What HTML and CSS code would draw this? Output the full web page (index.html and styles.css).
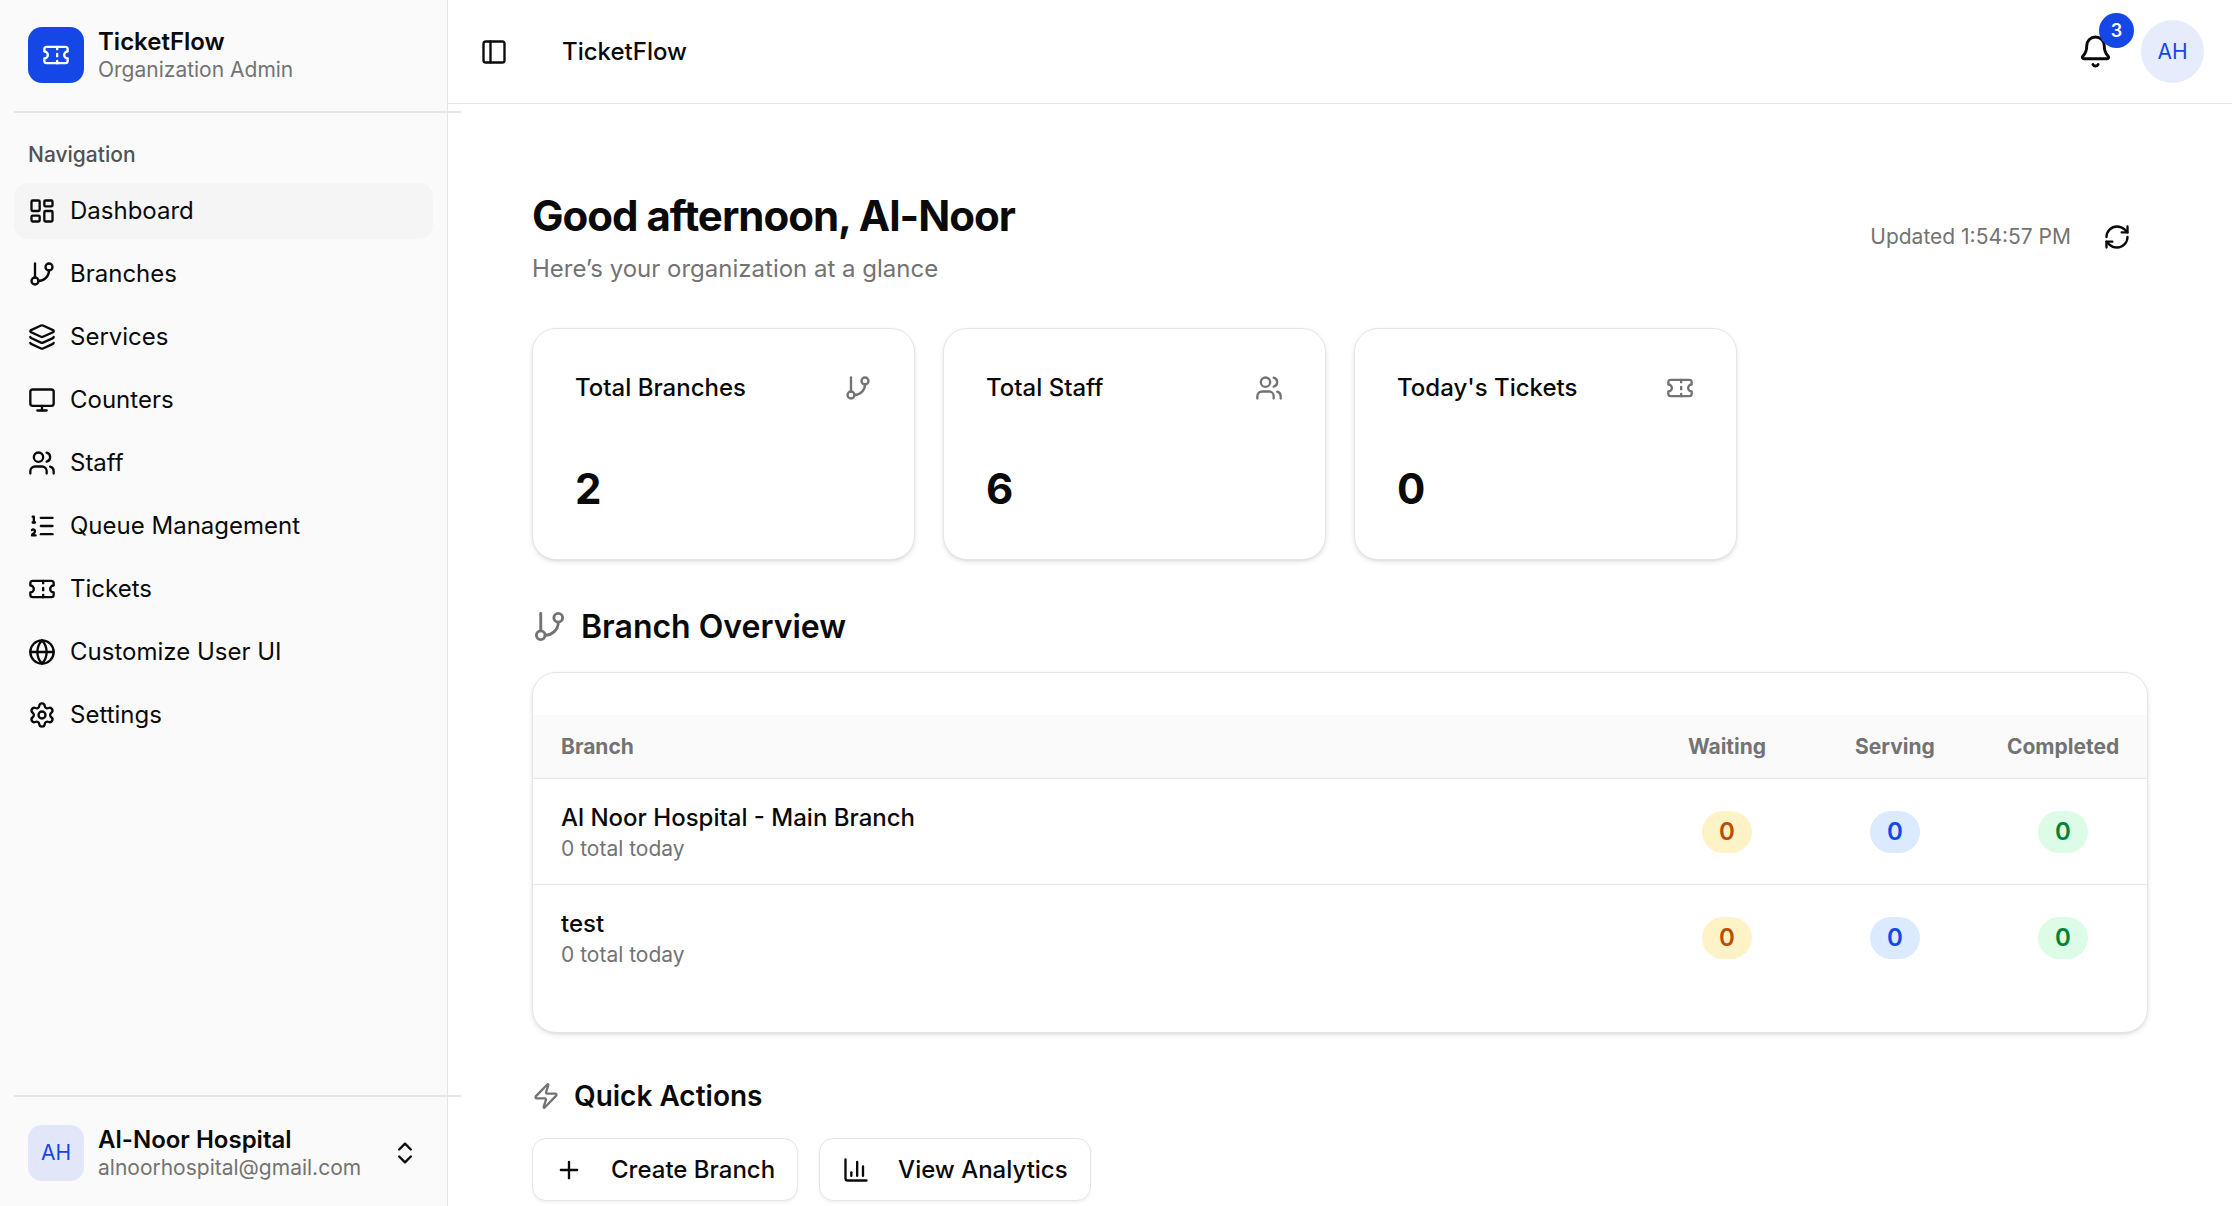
FILE: index.html
```html
<!DOCTYPE html>
<html lang="en">
<head>
<meta charset="utf-8">
<meta name="viewport" content="width=device-width, initial-scale=1">
<title>TicketFlow</title>
<link rel="stylesheet" href="styles.css">
</head>
<body>
<svg class="sprite" aria-hidden="true">
  <symbol id="ticket" viewBox="0 0 24 24"><path d="M2 9a3 3 0 0 1 0 6v2a2 2 0 0 0 2 2h16a2 2 0 0 0 2-2v-2a3 3 0 0 1 0-6V7a2 2 0 0 0-2-2H4a2 2 0 0 0-2 2Z"/><path d="M13 5v2"/><path d="M13 17v2"/><path d="M13 11v2"/></symbol>
  <symbol id="dashboard" viewBox="0 0 24 24"><rect width="7" height="9" x="3" y="3" rx="1"/><rect width="7" height="5" x="14" y="3" rx="1"/><rect width="7" height="9" x="14" y="12" rx="1"/><rect width="7" height="5" x="3" y="16" rx="1"/></symbol>
  <symbol id="branch" viewBox="0 0 24 24"><path d="M6 3v12"/><circle cx="18" cy="6" r="3"/><circle cx="6" cy="18" r="3"/><path d="M18 9a9 9 0 0 1-9 9"/></symbol>
  <symbol id="layers" viewBox="0 0 24 24"><path d="M12.83 2.18a2 2 0 0 0-1.66 0L2.6 6.08a1 1 0 0 0 0 1.83l8.58 3.91a2 2 0 0 0 1.66 0l8.58-3.9a1 1 0 0 0 0-1.83z"/><path d="M2 12a1 1 0 0 0 .58.91l8.6 3.91a2 2 0 0 0 1.65 0l8.58-3.9A1 1 0 0 0 22 12"/><path d="M2 17a1 1 0 0 0 .58.91l8.6 3.91a2 2 0 0 0 1.65 0l8.58-3.9A1 1 0 0 0 22 17"/></symbol>
  <symbol id="monitor" viewBox="0 0 24 24"><rect width="20" height="14" x="2" y="3" rx="2"/><path d="M8 21h8"/><path d="M12 17v4"/></symbol>
  <symbol id="users" viewBox="0 0 24 24"><path d="M16 21v-2a4 4 0 0 0-4-4H6a4 4 0 0 0-4 4v2"/><path d="M16 3.128a4 4 0 0 1 0 7.744"/><path d="M22 21v-2a4 4 0 0 0-3-3.87"/><circle cx="9" cy="7" r="4"/></symbol>
  <symbol id="list" viewBox="0 0 24 24"><path d="M11 5h10"/><path d="M11 12h10"/><path d="M11 19h10"/><path d="M4 4h1v5"/><path d="M4 9h2"/><path d="M6.5 20H3.4c0-1 2.6-1.925 2.6-3.5a1.5 1.5 0 0 0-2.6-1.02"/></symbol>
  <symbol id="globe" viewBox="0 0 24 24"><circle cx="12" cy="12" r="10"/><path d="M12 2a14.5 14.5 0 0 0 0 20 14.5 14.5 0 0 0 0-20"/><path d="M2 12h20"/></symbol>
  <symbol id="settings" viewBox="0 0 24 24"><path d="M9.671 4.136a2.34 2.34 0 0 1 4.659 0 2.34 2.34 0 0 0 3.319 1.915 2.34 2.34 0 0 1 2.33 4.033 2.34 2.34 0 0 0 0 3.831 2.34 2.34 0 0 1-2.33 4.033 2.34 2.34 0 0 0-3.319 1.915 2.34 2.34 0 0 1-4.659 0 2.34 2.34 0 0 0-3.32-1.915 2.34 2.34 0 0 1-2.33-4.033 2.34 2.34 0 0 0 0-3.831A2.34 2.34 0 0 1 6.35 6.051a2.34 2.34 0 0 0 3.319-1.915"/><circle cx="12" cy="12" r="3"/></symbol>
  <symbol id="chevrons" viewBox="0 0 24 24"><path d="m7 15 5 5 5-5"/><path d="m7 9 5-5 5 5"/></symbol>
  <symbol id="panel" viewBox="0 0 24 24"><rect width="18" height="18" x="3" y="3" rx="2"/><path d="M9 3v18"/></symbol>
  <symbol id="bell" viewBox="0 0 24 24"><path d="M10.268 21a2 2 0 0 0 3.464 0"/><path d="M3.262 15.326A1 1 0 0 0 4 17h16a1 1 0 0 0 .74-1.673C19.41 13.956 18 12.499 18 8A6 6 0 0 0 6 8c0 4.499-1.411 5.956-2.738 7.326"/></symbol>
  <symbol id="refresh" viewBox="0 0 24 24"><path d="M3 12a9 9 0 0 1 9-9 9.75 9.75 0 0 1 6.74 2.74L21 8"/><path d="M21 3v5h-5"/><path d="M21 12a9 9 0 0 1-9 9 9.75 9.75 0 0 1-6.74-2.74L3 16"/><path d="M8 16H3v5"/></symbol>
  <symbol id="zap" viewBox="0 0 24 24"><path d="M4 14a1 1 0 0 1-.78-1.63l9.9-10.2a.5.5 0 0 1 .86.46l-1.92 6.02A1 1 0 0 0 13 10h7a1 1 0 0 1 .78 1.63l-9.9 10.2a.5.5 0 0 1-.86-.46l1.92-6.02A1 1 0 0 0 11 14z"/></symbol>
  <symbol id="plus" viewBox="0 0 24 24"><path d="M5 12h14"/><path d="M12 5v14"/></symbol>
  <symbol id="chart" viewBox="0 0 24 24"><path d="M3 3v16a2 2 0 0 0 2 2h16"/><path d="M18 17V9"/><path d="M13 17V5"/><path d="M8 17v-3"/></symbol>
</svg>

<div class="app">
  <aside class="sidebar">
    <div class="account">
      <span class="tile tile-brand"><svg class="icon"><use href="#ticket"/></svg></span>
      <span class="account-text"><strong>TicketFlow</strong><small>Organization Admin</small></span>
    </div>
    <hr class="separator">
    <nav class="nav" aria-labelledby="nav-label">
      <h2 class="nav-label" id="nav-label">Navigation</h2>
      <ul class="nav-list">
        <li><a class="nav-link active" href="#" aria-current="page"><svg class="icon"><use href="#dashboard"/></svg>Dashboard</a></li>
        <li><a class="nav-link" href="#"><svg class="icon"><use href="#branch"/></svg>Branches</a></li>
        <li><a class="nav-link" href="#"><svg class="icon"><use href="#layers"/></svg>Services</a></li>
        <li><a class="nav-link" href="#"><svg class="icon"><use href="#monitor"/></svg>Counters</a></li>
        <li><a class="nav-link" href="#"><svg class="icon"><use href="#users"/></svg>Staff</a></li>
        <li><a class="nav-link" href="#"><svg class="icon"><use href="#list"/></svg>Queue Management</a></li>
        <li><a class="nav-link" href="#"><svg class="icon"><use href="#ticket"/></svg>Tickets</a></li>
        <li><a class="nav-link" href="#"><svg class="icon"><use href="#globe"/></svg>Customize User UI</a></li>
        <li><a class="nav-link" href="#"><svg class="icon"><use href="#settings"/></svg>Settings</a></li>
      </ul>
    </nav>
    <hr class="separator">
    <button class="account account-user" type="button">
      <span class="tile tile-user">AH</span>
      <span class="account-text"><strong>Al-Noor Hospital</strong><small>alnoorhospital@gmail.com</small></span>
      <svg class="icon"><use href="#chevrons"/></svg>
    </button>
  </aside>

  <div class="page">
    <header class="topbar">
      <button class="icon-button toggle" type="button" aria-label="Toggle sidebar"><svg class="icon"><use href="#panel"/></svg></button>
      <span class="topbar-title">TicketFlow</span>
      <button class="icon-button bell" type="button" aria-label="Notifications"><svg class="icon icon-lg"><use href="#bell"/></svg><span class="badge">3</span></button>
      <button class="avatar" type="button">AH</button>
    </header>

    <main class="content">
      <div class="intro">
        <div>
          <h1>Good afternoon, Al-Noor</h1>
          <p class="lead">Here’s your organization at a glance</p>
        </div>
        <div class="updated">
          <span>Updated 1:54:57 PM</span>
          <button class="icon-button" type="button" aria-label="Refresh"><svg class="icon"><use href="#refresh"/></svg></button>
        </div>
      </div>

      <section class="stats">
        <article class="card stat">
          <div class="stat-head"><h3>Total Branches</h3><svg class="icon muted"><use href="#branch"/></svg></div>
          <p class="stat-value">2</p>
        </article>
        <article class="card stat">
          <div class="stat-head"><h3>Total Staff</h3><svg class="icon muted"><use href="#users"/></svg></div>
          <p class="stat-value">6</p>
        </article>
        <article class="card stat">
          <div class="stat-head"><h3>Today's Tickets</h3><svg class="icon muted"><use href="#ticket"/></svg></div>
          <p class="stat-value">0</p>
        </article>
      </section>

      <section class="overview">
        <h2 class="section-title"><svg class="icon icon-lg muted"><use href="#branch"/></svg>Branch Overview</h2>
        <div class="card table-card">
          <table>
            <thead>
              <tr><th scope="col">Branch</th><th class="count" scope="col">Waiting</th><th class="count" scope="col">Serving</th><th class="count" scope="col">Completed</th></tr>
            </thead>
            <tbody>
              <tr>
                <td><div class="branch-name">Al Noor Hospital - Main Branch</div><div class="branch-total">0 total today</div></td>
                <td class="count"><span class="pill waiting">0</span></td>
                <td class="count"><span class="pill serving">0</span></td>
                <td class="count"><span class="pill completed">0</span></td>
              </tr>
              <tr>
                <td><div class="branch-name">test</div><div class="branch-total">0 total today</div></td>
                <td class="count"><span class="pill waiting">0</span></td>
                <td class="count"><span class="pill serving">0</span></td>
                <td class="count"><span class="pill completed">0</span></td>
              </tr>
            </tbody>
          </table>
        </div>
      </section>

      <section class="actions">
        <h2 class="section-title small"><svg class="icon muted"><use href="#zap"/></svg>Quick Actions</h2>
        <div class="action-row">
          <button class="button" type="button"><svg class="icon"><use href="#plus"/></svg>Create Branch</button>
          <button class="button" type="button"><svg class="icon"><use href="#chart"/></svg>View Analytics</button>
        </div>
      </section>
    </main>
  </div>
</div>
</body>
</html>
```
FILE: styles.css
```css
:root {
  --text: #0a0a0a;
  --muted: #737373;
  --border: #e5e5e5;
  --surface: #fafafa;
  --primary: #1447e6;
}

*, *::before, *::after { box-sizing: border-box; }

body {
  margin: 0;
  background: #fff;
  color: var(--text);
  font: 400 24px/34px Inter, "Liberation Sans", sans-serif;
}

h1, h2, h3, p, ul { margin: 0; padding: 0; }
ul { list-style: none; }
a { color: inherit; text-decoration: none; }
button {
  padding: 0;
  border: 0;
  background: none;
  color: inherit;
  font: inherit;
  cursor: pointer;
}

.sprite { position: absolute; width: 0; height: 0; }

.icon {
  flex: none;
  width: 28px;
  height: 28px;
  fill: none;
  stroke: currentColor;
  stroke-width: 2;
  stroke-linecap: round;
  stroke-linejoin: round;
}
.icon-lg { width: 35px; height: 35px; }
.muted { color: var(--muted); }

.app { display: flex; height: 100vh; }

/* Sidebar */
.sidebar {
  position: relative;
  z-index: 1;
  flex: none;
  display: flex;
  flex-direction: column;
  width: 448px;
  border-right: 1px solid var(--border);
  background: var(--surface);
}

.account {
  display: flex;
  align-items: center;
  gap: 14px;
  padding: 27px 28px 28px;
  text-align: left;
}
.account-user { padding: 28px 28px 25px; }
.account-text { flex: 1; display: grid; min-width: 0; }
.account-text strong { font-weight: 600; line-height: 30px; }
.account-text small { color: var(--muted); font-size: 21px; line-height: 26px; }

.tile {
  display: grid;
  place-items: center;
  flex: none;
  width: 56px;
  height: 56px;
  border-radius: 14px;
}
.tile-brand { background: var(--primary); color: #fff; }
.tile-user { background: #e1e7f8; color: var(--primary); font-size: 21px; }

/* The rule is as wide as the sidebar and inset, so it runs past the edge. */
.separator {
  flex: none;
  width: 100%;
  height: 2px;
  margin: 0 0 0 14px;
  border: 0;
  background: var(--border);
}

.nav { flex: 1; padding: 14px; overflow-y: auto; scrollbar-width: none; }
.nav-label {
  padding: 0 14px;
  color: #525252;
  font-size: 21px;
  font-weight: 500;
  line-height: 56px;
}
.nav-list { display: grid; gap: 7px; }
.nav-link {
  display: flex;
  align-items: center;
  gap: 14px;
  height: 56px;
  padding: 0 14px;
  border-radius: 14px;
}
.nav-link.active { background: #f5f5f5; }

/* Top bar */
.page { flex: 1; display: flex; flex-direction: column; min-width: 0; }
.topbar {
  flex: none;
  display: flex;
  align-items: center;
  padding: 20px 28px 20px 14px;
  border-bottom: 1px solid var(--border);
}
.topbar-title { flex: 1; margin-left: 37px; font-weight: 500; }
.icon-button {
  display: grid;
  place-items: center;
  width: 63px;
  height: 63px;
}
.bell { position: relative; margin-right: 14px; }
.badge {
  position: absolute;
  top: -7px;
  right: -7px;
  width: 35px;
  height: 35px;
  border-radius: 50%;
  background: var(--primary);
  color: #fff;
  font-size: 18px;
  font-weight: 600;
  line-height: 35px;
  text-align: center;
}
.avatar {
  width: 63px;
  height: 63px;
  border-radius: 50%;
  background: #e7ecfc;
  color: var(--primary);
  font-size: 21px;
}

/* Dashboard */
.content { flex: 1; padding: 84px; overflow-y: auto; scrollbar-width: none; }

.intro { display: flex; align-items: center; justify-content: space-between; }
.intro h1 { font-size: 42px; font-weight: 700; line-height: 56px; letter-spacing: -1px; }
.lead { margin-top: 7px; line-height: 35px; color: var(--muted); }
.updated {
  display: flex;
  align-items: center;
  gap: 14px;
  color: var(--muted);
  font-size: 21px;
}
.updated .icon-button { color: var(--text); }

.card {
  border: 1px solid var(--border);
  border-radius: 24px;
  background: #fff;
  box-shadow: 0 2px 5px rgb(0 0 0 / 10%), 0 2px 3px -2px rgb(0 0 0 / 10%);
}

.stats {
  display: grid;
  grid-template-columns: repeat(4, 1fr);
  gap: 28px;
  margin-top: 42px;
}
.stat { padding: 42px; }
.stat-head {
  display: flex;
  align-items: center;
  justify-content: space-between;
  margin-bottom: 56px;
}
.stat-head h3 { font-size: 24px; font-weight: 500; }
.stat-value { font-size: 42px; font-weight: 700; line-height: 56px; }

.overview { margin-top: 42px; }
.section-title {
  display: flex;
  align-items: center;
  gap: 14px;
  font-size: 32px;
  font-weight: 600;
  line-height: 49px;
}
.section-title.small { font-size: 28px; line-height: 42px; }

.table-card { margin-top: 21px; padding: 42px 0; overflow: hidden; }
table { width: 100%; border-collapse: collapse; text-align: left; }
th {
  padding: 14px 28px;
  background: var(--surface);
  color: var(--muted);
  font-size: 21px;
  font-weight: 700;
  line-height: 35px;
}
td { padding: 21px 28px; }
tr { border-bottom: 1px solid var(--border); }
tbody tr:last-child { border-bottom: 0; }
.count { width: 168px; text-align: center; }
th.count { padding-inline: 0; }
.branch-name { font-weight: 500; line-height: 35px; }
.branch-total { color: var(--muted); font-size: 21px; line-height: 28px; }

.pill {
  display: inline-block;
  padding: 0 17px;
  border-radius: 21px;
  font-weight: 600;
  line-height: 42px;
  vertical-align: middle;
}
.waiting { background: #fef3c6; color: #bb4d00; }
.serving { background: #dbeafe; color: #1447e6; }
.completed { background: #dcfce7; color: #008236; }

.actions { margin-top: 42px; }
.action-row { display: flex; gap: 21px; margin-top: 21px; }
.button {
  display: flex;
  align-items: center;
  gap: 28px;
  height: 63px;
  padding: 0 22px;
  border: 1px solid var(--border);
  border-radius: 14px;
  background: #fff;
  box-shadow: 0 2px 3px rgb(0 0 0 / 5%);
  font-weight: 500;
}
```
